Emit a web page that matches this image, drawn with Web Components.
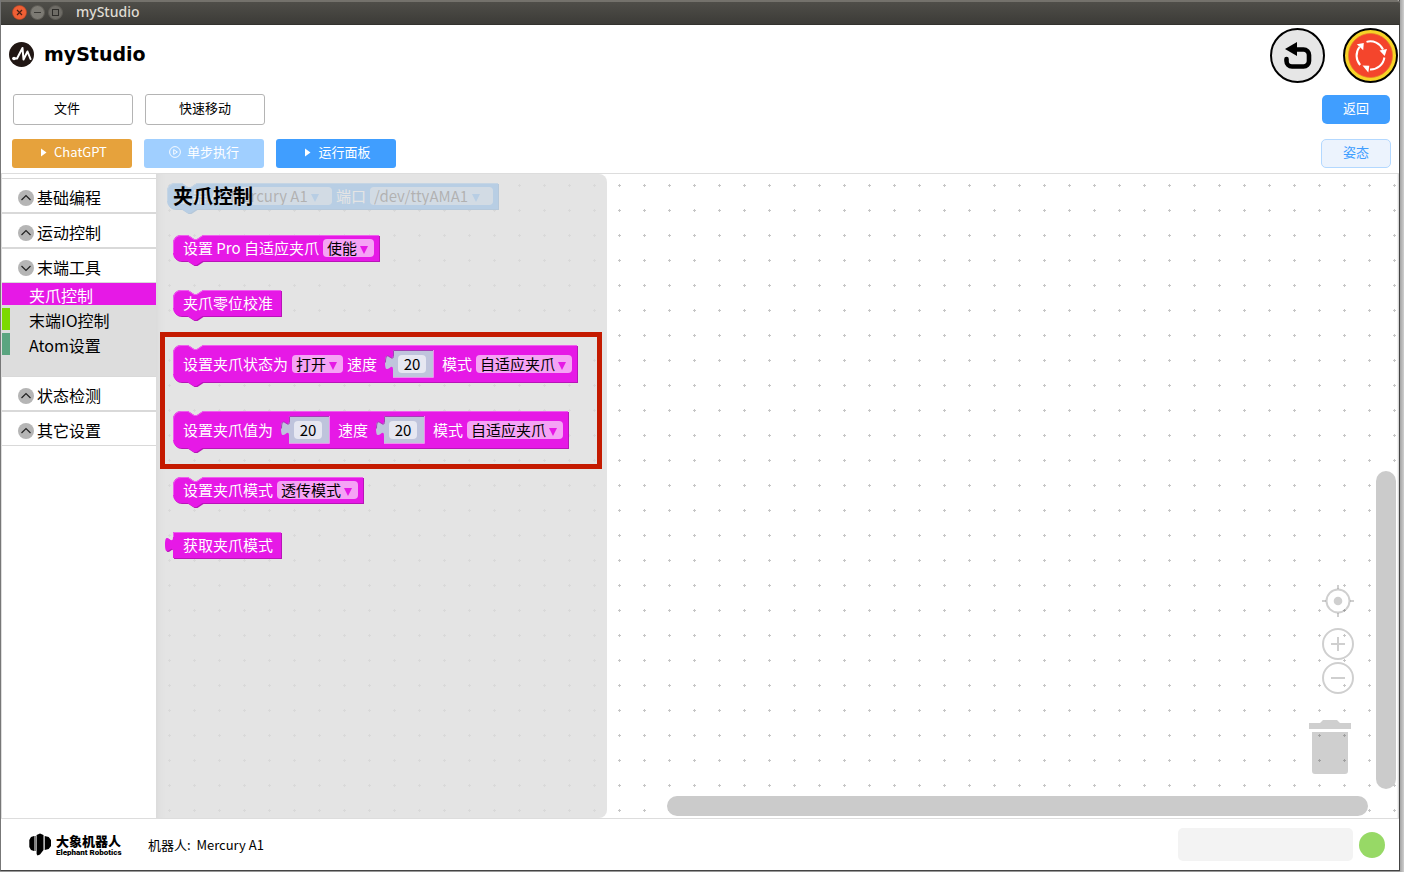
<!DOCTYPE html>
<html lang="zh-CN">
<head>
<meta charset="utf-8">
<title>myStudio</title>
<style>
  html, body { height: 100%; margin: 0; }
  body {
    box-sizing: border-box; padding: 0 4px 1px 0; background: #aaa linear-gradient(to left, #cfcfcf, #999 5px);
    font-family: "Noto Sans CJK SC", "Noto Sans", sans-serif; font-size: 13px; color: #000;
  }
</style>
</head>
<body>
<app-window>
  <title-bar slot="bar">myStudio</title-bar>
  <app-header slot="header">myStudio</app-header>
  <tool-row slot="tools">
    <tool-button kind="plain">文件</tool-button>
    <tool-button kind="plain">快速移动</tool-button>
    <tool-button slot="end" kind="back">返回</tool-button>
  </tool-row>
  <tool-row slot="tools" class="run">
    <tool-button kind="warning" icon="play">ChatGPT</tool-button>
    <tool-button kind="muted" icon="ring">单步执行</tool-button>
    <tool-button kind="primary" icon="play">运行面板</tool-button>
    <tool-button slot="end" kind="pose">姿态</tool-button>
  </tool-row>
  <side-nav slot="nav">
    <nav-group label="基础编程"></nav-group>
    <nav-group label="运动控制"></nav-group>
    <nav-group label="末端工具" open>
      <nav-item color="#e619e6" active>夹爪控制</nav-item>
      <nav-item color="#7bd900">末端IO控制</nav-item>
      <nav-item color="#5ba580">Atom设置</nav-item>
    </nav-group>
    <nav-group label="状态检测"></nav-group>
    <nav-group label="其它设置"></nav-group>
  </side-nav>
  <work-space slot="canvas">
    <code-block style="--fill:#2492ff;--dark:#1d75cc;--light:#66b3ff">
      <block-label>机器人</block-label><block-select loose value="Mercury A1" label="机器人"></block-select>
      <block-label>端口</block-label><block-select loose value="/dev/ttyAMA1" label="端口"></block-select>
    </code-block>
  </work-space>
  <block-flyout slot="flyout" heading="夹爪控制">
    <code-block><block-label>设置 Pro 自适应夹爪</block-label><block-select value="使能" label="使能"></block-select></code-block>
    <code-block plain><block-label>夹爪零位校准</block-label></code-block>
    <block-frame>
      <code-block tall>
        <block-label>设置夹爪状态为</block-label><block-select value="打开" label="状态"></block-select>
        <block-label>速度</block-label><block-number value="20" label="速度"></block-number>
        <block-label>模式</block-label><block-select value="自适应夹爪" label="模式"></block-select>
      </code-block>
      <code-block tall>
        <block-label>设置夹爪值为</block-label><block-number value="20" label="夹爪值"></block-number>
        <block-label>速度</block-label><block-number value="20" label="速度"></block-number>
        <block-label>模式</block-label><block-select value="自适应夹爪" label="模式"></block-select>
      </code-block>
    </block-frame>
    <code-block><block-label>设置夹爪模式</block-label><block-select value="透传模式" label="模式"></block-select></code-block>
    <code-block plain output><block-label>获取夹爪模式</block-label></code-block>
  </block-flyout>
  <status-bar slot="footer" robot="Mercury A1"></status-bar>
</app-window>

<script>
const define = (name, render, after) => customElements.define(name, class extends HTMLElement {
  connectedCallback() {
    if (this.shadowRoot) return;
    const root = this.attachShadow({ mode: 'open' });
    root.innerHTML = '<style>*{box-sizing:border-box}:host{display:block;box-sizing:border-box}button{font:inherit;cursor:pointer}svg{display:block}</style>' + render(this);
    if (after) after(this, root);
  }
});

define('app-window', () => `
<style>
  :host { height: 100%; display: flex; flex-direction: column; background: #fff; border: solid #444; border-width: 0 1px 1px; border-left-color: #777; }
  main { flex: 1; min-height: 0; display: flex; position: relative; border-top: 1px solid #ddd; border-bottom: 1px solid #ddd; }
  ::slotted([slot=nav]) { flex: none; width: 155px; }
  ::slotted([slot=canvas]) { flex: 1; min-width: 0; }
  ::slotted([slot=flyout]) { position: absolute; left: 155px; top: 0; bottom: 0; width: 451px; }
  ::slotted(.run) { height: 40px; }
</style>
<slot name="bar"></slot><slot name="header"></slot><slot name="tools"></slot>
<main><slot name="nav"></slot><slot name="canvas"></slot><slot name="flyout"></slot></main>
<slot name="footer"></slot>`);

define('title-bar', () => `
<style>
  :host { flex: none; height: 25px; display: flex; align-items: center; gap: 3px; padding: 0 0 2px 11px; margin-right: -1px;
    background: linear-gradient(#4f4e49, #3c3b37); border-top: 2px solid #74726c; border-bottom: 1px solid #33322e; border-radius: 0 3px 0 0;
    color: #dfdbd2; font: 500 14px/20px "Noto Sans", sans-serif; }
  button { width: 15px; height: 15px; padding: 0; border: 0; background: none; }
  span { margin-left: 10px; }
</style>
<button aria-label="关闭"><svg width="15" height="15"><circle cx="7.500" cy="7.500" r="7" fill="#ee5f35" stroke="#c04422" stroke-width=".6"/><path d="M5 5l5 5M10 5l-5 5" stroke="#4a2014" stroke-width="1.200"/></svg></button>
<button aria-label="最小化"><svg width="15" height="15"><circle cx="7.500" cy="7.500" r="7" fill="#7c7a73" stroke="#5c5a54"/><path d="M4 7.500h7" stroke="#3a3935"/></svg></button>
<button aria-label="最大化"><svg width="15" height="15"><circle cx="7.500" cy="7.500" r="7" fill="#6e6c66" stroke="#5c5a54"/><rect x="4.500" y="4.500" width="6" height="6" fill="none" stroke="#2e2d2a"/></svg></button>
<span><slot></slot></span>`);

define('app-header', () => `
<style>
  :host { flex: none; height: 60px; display: flex; align-items: flex-start; padding: 3px 1px 0 8px; }
  .logo { margin-top: 14px; }
  h1 { margin: 0 auto 0 9px; font: bold 19px/52px "DejaVu Sans", sans-serif; }
  button { border: 0; background: none; padding: 0; width: 55px; height: 55px; border-radius: 50%; margin-left: 18px; }
</style>
<svg class="logo" width="26" height="26" viewBox="0 0 26 26"><circle cx="12.500" cy="12.500" r="12.500" fill="#211714"/><g fill="none" stroke="#fff" stroke-width="2" stroke-linejoin="round" stroke-linecap="round"><path d="M4.500 16.500h3.500l5.500-10.500 1 11.500 4-8 3 7.500"/></g><circle cx="5" cy="16.500" r="1.800" fill="#fff"/></svg>
<h1><slot></slot></h1>
<button aria-label="撤销"><svg width="55" height="55"><circle cx="27.500" cy="27.500" r="26.500" fill="#e6e6e6" stroke="#000" stroke-width="2"/><path d="M15 21l12-7v14z"/><path d="M25 21.500h8.500a5.500 5.500 0 0 1 5.500 5.500v6a5.500 5.500 0 0 1-5.500 5.500H22a5.500 5.500 0 0 1-5.500-5.500v-2" fill="none" stroke="#000" stroke-width="4.600" stroke-linecap="round"/></svg></button>
<button aria-label="急停"><svg width="55" height="55"><circle cx="27.500" cy="27.500" r="26.500" fill="#f6d327" stroke="#000" stroke-width="2"/><circle cx="27.500" cy="27.500" r="22" fill="#f4452c" stroke="#e9782a" stroke-width=".8"/>
<g fill="none" stroke="#fff" stroke-width="2"><path d="M23.500 13.900A14 14 0 0 1 40 21.500"/><path d="M41.400 29.500A14 14 0 0 1 27 41.500"/><path d="M17.200 37A14 14 0 0 1 16.500 19"/></g>
<g fill="#fff"><path d="M36.500 22.500l7.500-1.500-2.300 7z"/><path d="M19.500 37.500l6.800.2-1 6.800z"/><path d="M13.800 16.300l7-1.300-.6 7.200z"/></g></svg></button>`);

define('tool-row', () => `
<style>
  :host { flex: none; height: 48px; display: flex; align-items: center; padding: 0 8px 0 11px; }
  div { display: flex; gap: 12px; }
  .start { margin-right: auto; }
</style>
<div class="start"><slot></slot></div><div><slot name="end"></slot></div>`);

define('tool-button', el => `
<style>
  button { display: flex; align-items: center; justify-content: center; gap: 6px; width: 120px; height: 29px; border: 0; border-radius: 3px; padding: 0 0 2px; color: #fff; line-height: 20px; }
  .plain { height: 31px; background: #fff; color: #000; border: 1px solid #b4b4b4; padding-right: 12px; margin-left: 1px; margin-right: -1px; }
  .plain.wide { padding-right: 0; }
  .warning { background: #e6a23c; } .muted { background: #a0cfff; } .primary { background: #409eff; }
  .back { width: 68px; background: #409eff; border-radius: 5px; margin-right: 1px; }
  .pose { width: 70px; background: #ecf3fd; color: #409eff; border: 1px solid #b3d8ff; border-radius: 5px; }
</style>
<button class="${el.getAttribute('kind')}${el.textContent.length > 2 ? ' wide' : ''}">${
  { play: '<svg width="11" height="9"><path d="M4 .5l5.500 4L4 8.500z" fill="#fff"/></svg>',
    ring: '<svg width="12" height="12" viewBox="0 0 12 12" fill="none" stroke="#fff"><circle cx="6" cy="6" r="5.400" stroke-width=".9"/><path d="M4.700 3.600L8.400 6 4.700 8.400z" stroke-width=".9"/></svg>' }[el.getAttribute('icon')] || ''
}<slot></slot></button>`);

define('side-nav', () => `
<style>:host { padding-top: 4px; border-left: 1px solid #ddd; background: #fff; }</style>
<nav><slot></slot></nav>`);

define('nav-group', el => `
<style>
  button { width: 100%; height: 35px; display: flex; align-items: center; gap: 3px; padding: 3px 0 0 16px; border: solid #d9d9d9; border-width: 1px 0; background: #fff; font-size: 16px; line-height: 24px; color: #000; }
  svg { margin-top: 2px; }
  div { height: 93px; display: flex; flex-direction: column; gap: 3px; background: #ddd; }
</style>
<button aria-expanded="${el.hasAttribute('open')}"><svg width="16" height="16"><circle cx="8" cy="8" r="8" fill="#b5b5b5"/><path d="${el.hasAttribute('open') ? 'M3.500 6l4.500 4.500L12.500 6' : 'M3.500 10l4.500-4.500 4.500 4.500'}" fill="none" stroke="#222" stroke-width="1.200"/></svg>${el.getAttribute('label')}</button>
${el.hasAttribute('open') ? '<div><slot></slot></div>' : ''}`);

define('nav-item', el => `
<style>
  a { display: flex; align-items: center; height: 22px; padding-left: 19px; border-left: 8px solid ${el.getAttribute('color')}; font-size: 16px; line-height: 22px; color: #000; text-decoration: none; }
  a.on { color: #fff; background: ${el.getAttribute('color')}; }
  span { padding-top: 2px; }
</style>
<a href="#" class="${el.hasAttribute('active') ? 'on' : ''}"><span><slot></slot></span></a>`);

define('work-space', () => `
<style>
  :host { position: relative; overflow: hidden; background: #fff; }
  .dots, .item { position: absolute; }
  .dots { inset: 0; width: 100%; height: 100%; }
  .item { left: 11px; top: 9px; }
  .bar { position: absolute; border-radius: 10px; background: #cbcbcb; }
  .h { left: 511px; right: 31px; bottom: 2px; height: 20px; }
  .v { right: 3px; bottom: 29px; width: 20px; height: 318px; }
  .zoom { position: absolute; right: 45px; bottom: 124px; display: grid; gap: 2px; }
  .trash { position: absolute; right: 48px; bottom: 44px; }
  button { display: block; padding: 0; border: 0; background: none; }
  .centre { margin-bottom: 9px; }
  .edge { position: absolute; inset: 0 0 0 auto; width: 2px; background: linear-gradient(to right, #fff0, #ccc); }
</style>
<svg class="dots"><defs><pattern id="g" width="25" height="25" patternUnits="userSpaceOnUse"><path d="M12 11.500h3M13.500 10v3" stroke="#c6c6c6"/></pattern></defs><rect width="100%" height="100%" fill="url(#g)"/></svg>
<div class="item"><slot></slot></div>
<div class="zoom">
  <button class="centre" aria-label="居中"><svg width="32" height="32" fill="none" stroke="#000" stroke-opacity=".19" stroke-width="2"><circle cx="16" cy="16" r="11.500"/><path d="M16 0v4M16 28v4M0 16h4M28 16h4"/><circle cx="16" cy="16" r="4.300" fill="#cfcfcf" stroke="none"/></svg></button>
  <button aria-label="放大"><svg width="32" height="32" fill="none" stroke="#000" stroke-opacity=".19" stroke-width="2"><circle cx="16" cy="16" r="15"/><path d="M9 16h14M16 9v14"/></svg></button>
  <button aria-label="缩小"><svg width="32" height="32" fill="none" stroke="#000" stroke-opacity=".19" stroke-width="2"><circle cx="16" cy="16" r="15"/><path d="M9 16h14"/></svg></button>
</div>
<button class="trash" aria-label="删除"><svg width="42" height="54" fill="#000" fill-opacity=".19"><path d="M0 3h11l3-3h14l3 3h11v6H0zM3 12h36v39a3 3 0 0 1-3 3H6a3 3 0 0 1-3-3z"/></svg></button>
<div class="edge"></div><div class="bar h"></div><div class="bar v"></div>`);

define('block-flyout', el => `
<style>
  :host { background: rgba(221,221,221,.8); border-radius: 0 8px 8px 0; padding: 10px 5px 0 4px; box-shadow: inset 12px 0 10px -10px rgba(0,0,0,.05); }
  h2 { margin: 0 0 27px 13px; font-size: 20px; line-height: 24px; font-weight: bold; }
  .list { display: flex; flex-direction: column; align-items: flex-start; }
  ::slotted(code-block) { margin: 0 0 28px 13px; }
  ::slotted(block-frame) { margin: -13px 0 8px; align-self: stretch; }
</style>
<h2>${el.getAttribute('heading')}</h2><div class="list"><slot></slot></div>`);

define('block-frame', () => `
<style>
  :host { border: 5px solid #c41a00; padding: 8px 8px 15px; display: flex; flex-direction: column; align-items: flex-start; gap: 28px; }
</style><slot></slot>`);

define('block-label', () => `
<style>:host { position: relative; color: #fff; font-size: 15px; line-height: 20px; white-space: nowrap; }</style><slot></slot>`);

define('block-select', el => `
<style>
  :host { position: relative; height: 18px; }
  select { appearance: none; display: block; height: 18px; margin: 0; border: 0; border-radius: 4px; padding: 0 16px 0 4px; background: rgba(255,255,255,.6); color: #000; font: inherit; font-size: 15px; line-height: 18px; }
  svg { position: absolute; right: 6px; top: 7px; pointer-events: none; }
  :host([loose]) select { padding-right: 24px; }
  :host([loose]) svg { right: 13px; }
</style>
<select aria-label="${el.getAttribute('label')}"><option>${el.getAttribute('value')}</option></select>
<svg width="8" height="8"><path d="M0 0h8L4 8z" style="fill:var(--fill,#e619e6)"/></svg>`);

define('block-number', el => `
<style>
  :host { position: relative; width: 49px; height: 28px; margin: 0 4px; padding: 5px 0 0 13px; }
  svg { position: absolute; left: 0; top: 0; }
  input { position: relative; display: block; width: 28px; height: 18px; border: 0; border-radius: 4px; padding: 0; text-align: center; background: #e6e7f1; color: #000; font: inherit; font-size: 15px; line-height: 18px; }
</style>
<svg width="49" height="28"><path d="M8 0H48V28H8V20C8 10 0 28 0 12.500S8 15 8 5z" fill="#bfc4dc"/><path d="M48.500 0V27.500H8" fill="none" stroke="#f08af0"/><path d="M48 .5H8.500V5C8.500 15 .5-3 .5 12.500" fill="none" stroke="#a43fb4"/></svg>
<input type="text" aria-label="${el.getAttribute('label')}" value="${el.getAttribute('value')}">`);

/* Block outline: drawn behind the fields and redrawn whenever the block's size changes. */
define('code-block', el => `
<style>
  :host { position: relative; width: max-content; height: 27px; display: flex; align-items: center; gap: 4px; padding: 0 6px 1px 10px; }
  :host([tall]) { height: 38px; padding-bottom: 0; }
  :host([plain]) { padding-right: 9px; }
  svg { position: absolute; left: 0; top: 0; width: 100%; height: 100%; overflow: visible; }
  .shade { fill: var(--dark, #b814b8); } .body { fill: var(--fill, #e619e6); } .lit { fill: none; stroke: var(--light, #ee5eee); }
</style>
<svg><path class="shade" transform="translate(1 1)"/><path class="body"/><path class="lit"/></svg><slot></slot>`,
(el, root) => {
  const draw = () => {
    const w = el.offsetWidth - 1, h = el.offsetHeight - 1;
    const [shade, body, lit] = root.querySelectorAll('path');
    const d = el.hasAttribute('output')
      ? `M0 0H${w}V${h}H0V20C0 10-8 28-8 12.500S0 15 0 5z`
      : `M0 8A8 8 0 0 1 8 0H15l6 4h3l6-4H${w}V${h}H29.500l-6 4h-3l-6-4H8a8 8 0 0 1-8-8z`;
    shade.setAttribute('d', d);
    body.setAttribute('d', d);
    lit.setAttribute('d', el.hasAttribute('output')
      ? `M.5 5V.5H${w}`
      : `M.5 ${h - 8}V8A7.500 7.500 0 0 1 8 .5H15l6 4h3l6-4H${w}`);
  };
  draw();
  new ResizeObserver(draw).observe(el);
});

define('status-bar', el => `
<style>
  :host { flex: none; height: 51px; display: flex; align-items: center; padding: 0 14px 0 27px; }
  .brand { display: grid; width: 65px; margin: 2px 27px 0 4px; }
  .cn { font-size: 13px; line-height: 14px; font-weight: 900; }
  .en { font: 900 8px/10px Roboto, sans-serif; white-space: nowrap; }
  .robot { margin-right: auto; line-height: 20px; white-space: pre; }
  output { width: 175px; height: 33px; border-radius: 5px; background: #f3f3f3; }
  .lamp { width: 26px; height: 26px; border-radius: 50%; background: #97d966; margin-left: 6px; }
</style>
<svg width="24" height="23"><path d="M1.300 7L3 4l3-1v15l-3-1-1.700-3zM6.500 3h1v15h-1zM8.600 2L12 .5 15.500 2v15L12 21.500 9.500 22.500 8.600 21zM16.700 3l4 1 2.300 3v6l-2.300 3-4 1z"/></svg>
<div class="brand"><span class="cn">大象机器人</span><span class="en">Elephant Robotics</span></div>
<span class="robot">机器人:  ${el.getAttribute('robot')}</span>
<output aria-label="消息"></output><span class="lamp" role="img" aria-label="已连接"></span>`);
</script>
</body>
</html>
